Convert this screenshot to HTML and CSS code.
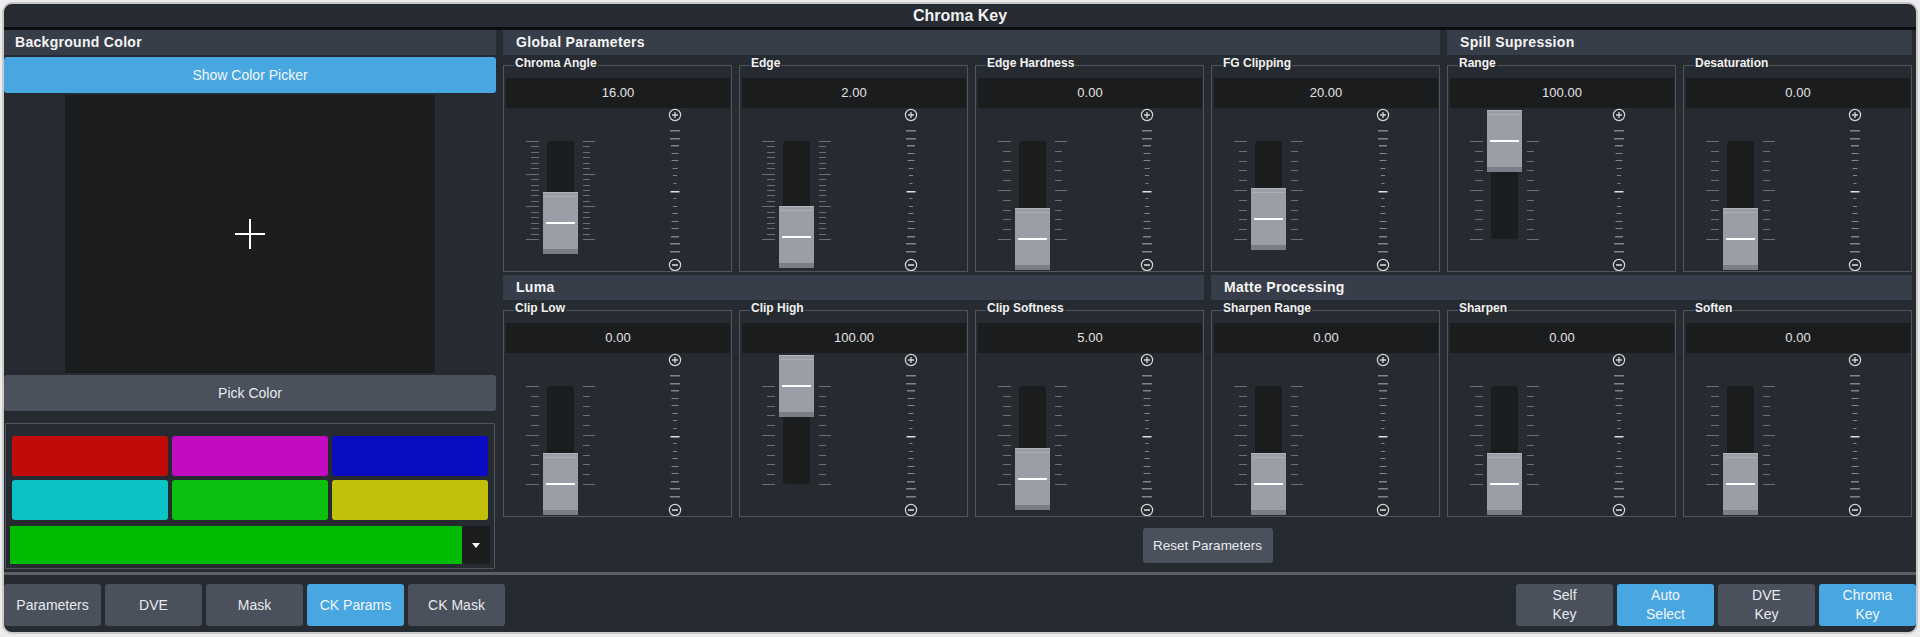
FILE: index.html
```html
<!DOCTYPE html>
<html lang="en">
<head>
  <meta charset="UTF-8">
  <meta name="viewport" content="width=device-width, initial-scale=1.0">
  <title>Chroma Key</title>
  <link rel="stylesheet" href="styles.css">
</head>
<body>
  <div class="window">
    <div class="titlebar">Chroma Key</div>

    <div class="main">
      <div class="left">
        <div class="section-head">Background Color</div>
        <button class="btn wide-btn btn-blue show-picker">Show Color Picker</button>
        <div class="picker-row">
          <div class="picker">
            <svg width="30" height="30" viewBox="0 0 30 30">
              <rect x="0" y="14" width="30" height="2" fill="#fff"/>
              <rect x="14" y="0" width="2" height="30" fill="#fff"/>
            </svg>
          </div>
        </div>
        <button class="btn wide-btn">Pick Color</button>
        <div class="swatch-box">
          <div class="swatches">
            <div class="swatch" style="background:#c10b0b"></div>
            <div class="swatch" style="background:#c10cc1"></div>
            <div class="swatch" style="background:#0a0cc1"></div>
            <div class="swatch" style="background:#0bc2c5"></div>
            <div class="swatch" style="background:#0bc10f"></div>
            <div class="swatch" style="background:#c1c10c"></div>
          </div>
          <div class="combo">
            <div class="combo-color"></div>
            <div class="combo-arrow">
              <svg width="8" height="5" viewBox="0 0 8 5"><path d="M0 0h8L4 5z" fill="#fff"/></svg>
            </div>
          </div>
        </div>
      </div>

      <div class="right">
        <div class="param-grid">
          <div class="section-head span-4">Global Parameters</div>
          <div class="section-head span-2">Spill Supression</div>

          <fieldset class="param"><legend>Chroma Angle</legend><div class="value">16.00</div><div class="fader" data-value="16" data-ticks="19"></div></fieldset>
          <fieldset class="param"><legend>Edge</legend><div class="value">2.00</div><div class="fader" data-value="2" data-ticks="19"></div></fieldset>
          <fieldset class="param"><legend>Edge Hardness</legend><div class="value">0.00</div><div class="fader" data-value="0" data-ticks="11"></div></fieldset>
          <fieldset class="param"><legend>FG Clipping</legend><div class="value">20.00</div><div class="fader" data-value="20" data-ticks="11"></div></fieldset>
          <fieldset class="param"><legend>Range</legend><div class="value">100.00</div><div class="fader" data-value="100" data-ticks="11"></div></fieldset>
          <fieldset class="param"><legend>Desaturation</legend><div class="value">0.00</div><div class="fader" data-value="0" data-ticks="11"></div></fieldset>

          <div class="section-head span-3 second">Luma</div>
          <div class="section-head span-3 second">Matte Processing</div>

          <fieldset class="param"><legend>Clip Low</legend><div class="value">0.00</div><div class="fader" data-value="0" data-ticks="11"></div></fieldset>
          <fieldset class="param"><legend>Clip High</legend><div class="value">100.00</div><div class="fader" data-value="100" data-ticks="11"></div></fieldset>
          <fieldset class="param"><legend>Clip Softness</legend><div class="value">5.00</div><div class="fader" data-value="5" data-ticks="11"></div></fieldset>
          <fieldset class="param"><legend>Sharpen Range</legend><div class="value">0.00</div><div class="fader" data-value="0" data-ticks="11"></div></fieldset>
          <fieldset class="param"><legend>Sharpen</legend><div class="value">0.00</div><div class="fader" data-value="0" data-ticks="11"></div></fieldset>
          <fieldset class="param"><legend>Soften</legend><div class="value">0.00</div><div class="fader" data-value="0" data-ticks="11"></div></fieldset>
        </div>
        <div class="reset-row">
          <button class="btn reset-btn">Reset Parameters</button>
        </div>
      </div>
    </div>

    <div class="bottombar">
      <div class="tab-group">
        <button class="btn tab">Parameters</button>
        <button class="btn tab">DVE</button>
        <button class="btn tab">Mask</button>
        <button class="btn tab btn-blue">CK Params</button>
        <button class="btn tab">CK Mask</button>
      </div>
      <div class="tab-group">
        <button class="btn tab">Self<br>Key</button>
        <button class="btn tab btn-blue">Auto<br>Select</button>
        <button class="btn tab">DVE<br>Key</button>
        <button class="btn tab btn-blue">Chroma<br>Key</button>
      </div>
    </div>
  </div>

  <script>
    const TOP = 33;
    const SPAN = 98;
    const scaleWidths = [10, 10, 8, 7, 7, 5, 4, 3, 9, 3, 4, 5, 7, 7, 8, 10, 10];

    function buildFader(el) {
      const value = parseFloat(el.dataset.value);
      const ticks = parseInt(el.dataset.ticks, 10);
      const step = SPAN / (ticks - 1);
      const major = (ticks - 1) / (ticks === 19 ? 3 : 2);
      let svg = '';

      // ticks either side of the fader
      for (let i = 0; i < ticks; i++) {
        const y = Math.round(TOP + i * step);
        const long = i % major === 0;
        svg += `<rect x="${long ? 20 : 25}" y="${y}" width="${long ? 13 : 8}" height="1" fill="#6b7078"/>`;
        svg += `<rect x="77" y="${y}" width="${long ? 12 : 7}" height="1" fill="#6b7078"/>`;
      }

      svg += `<rect x="41" y="${TOP}" width="27" height="${SPAN}" rx="3" fill="#1b1c1e"/>`;

      // fine adjust scale
      scaleWidths.forEach((w, i) => {
        const y = Math.round(22 + i * 7.5625);
        const mid = i === 8;
        const thick = w >= 8 && !mid;
        svg += `<rect x="${169 - w / 2}" y="${y}" width="${w}" height="${mid || thick ? 1.5 : 1}" fill="${mid ? '#e0e0e0' : '#80848c'}"/>`;
      });

      // handle
      const cy = Math.round(TOP + (1 - value / 100) * SPAN);
      svg += `<rect x="37" y="${cy - 31}" width="35" height="62" fill="#9a9ea7"/>`;
      svg += `<rect x="37" y="${cy - 31}" width="35" height="1" fill="#b0b4bb"/>`;
      svg += `<rect x="38" y="${cy - 27}" width="33" height="1" fill="#abafb6"/>`;
      svg += `<rect x="37" y="${cy + 26}" width="35" height="5" fill="#7a7e86"/>`;
      svg += `<rect x="40" y="${cy - 1}" width="29" height="2" fill="#ffffff"/>`;

      // plus / minus
      svg += `<circle cx="169" cy="7" r="5.6" fill="none" stroke="#d6d6d6" stroke-width="1.2"/>`;
      svg += `<path d="M166 7h6M169 4v6" stroke="#d6d6d6" stroke-width="1.3"/>`;
      svg += `<circle cx="169" cy="157" r="5.6" fill="none" stroke="#d6d6d6" stroke-width="1.2"/>`;
      svg += `<path d="M166 157h6" stroke="#d6d6d6" stroke-width="1.6"/>`;

      el.innerHTML = `<svg width="224" height="163" viewBox="0 0 224 163">${svg}</svg>`;
    }

    document.querySelectorAll('.fader').forEach(buildFader);
  </script>
</body>
</html>
```

FILE: styles.css
```css
* {
  box-sizing: border-box;
}
body {
  margin: 0;
  background: #ececec;
  font-family: "Liberation Sans", Arial, sans-serif;
}
.window {
  margin: 2px;
  height: 632px;
  border: 2px solid #c9c9c9;
  border-radius: 10px;
  background: #262a31;
  overflow: hidden;
  display: flex;
  flex-direction: column;
}
.titlebar {
  height: 26px;
  line-height: 24px;
  border-bottom: 3px solid #0c0d0f;
  text-align: center;
  color: #f2f2f2;
  font-weight: bold;
  font-size: 16px;
}
.main {
  display: flex;
  gap: 7px;
  height: 542px;
}
.left {
  width: 492px;
  display: flex;
  flex-direction: column;
}
.right {
  width: 1409px;
}
.section-head {
  height: 25px;
  line-height: 25px;
  background: #383e49;
  color: #f5f5f5;
  font-weight: bold;
  font-size: 14px;
  letter-spacing: 0.3px;
  padding-left: 11px;
}
.right .section-head {
  padding-left: 13px;
}
.right .section-head.second {
  margin-top: 1px;
}
.btn {
  border: none;
  border-radius: 3px;
  background: #4a505c;
  color: #e8eaee;
  font-family: "Liberation Sans", Arial, sans-serif;
  font-size: 14px;
  padding: 0;
  cursor: pointer;
}
.btn-blue {
  background: #48a6e1;
  color: #f2f7fb;
}
.wide-btn {
  width: 100%;
  height: 36px;
}
.show-picker {
  margin-top: 2px;
}
.picker-row {
  height: 282px;
  padding: 2px 0;
  display: flex;
  justify-content: center;
}
.picker {
  width: 370px;
  height: 278px;
  background: #1c1d1f;
  display: flex;
  align-items: center;
  justify-content: center;
}
.picker svg {
  display: block;
}
.swatch-box {
  margin: 12px 1px 0;
  border: 1px solid #50555c;
  padding: 12px 4px 4px;
}
.swatches {
  display: grid;
  grid-template-columns: repeat(3, 1fr);
  grid-auto-rows: 40px;
  gap: 4px;
  margin: 0 2px;
}
.swatch {
  border-radius: 3px;
}
.combo {
  margin-top: 6px;
  height: 38px;
  display: flex;
}
.combo-color {
  flex: 1;
  background: #00bb00;
}
.combo-arrow {
  width: 28px;
  background: #1c1d1f;
  display: flex;
  align-items: center;
  justify-content: center;
}
.combo-arrow svg {
  display: block;
}
.param-grid {
  display: grid;
  grid-template-columns: repeat(6, 229px);
  column-gap: 7px;
  row-gap: 2px;
}
.span-4 {
  grid-column: span 4;
}
.span-3 {
  grid-column: span 3;
}
.span-2 {
  grid-column: span 2;
}
.param {
  margin: 0;
  min-width: 0;
  padding: 5px 1px 0 2px;
  border: 1px solid #51555c;
}
.param legend {
  margin-left: 8px;
  padding: 0 1px 4px;
  font-size: 12px;
  font-weight: bold;
  line-height: 12px;
  color: #f2f2f2;
}
.value {
  height: 30px;
  line-height: 30px;
  background: #1b1c1e;
  color: #e4e4e4;
  text-align: center;
  font-size: 13px;
}
.fader svg {
  display: block;
}
.reset-row {
  display: flex;
  justify-content: center;
  margin-top: 11px;
}
.reset-btn {
  width: 130px;
  height: 35px;
  font-size: 13.5px;
}
.bottombar {
  border-top: 3px solid #5b5f66;
  height: 60px;
  padding: 9px 0 6px;
  display: flex;
  justify-content: space-between;
}
.tab-group {
  display: flex;
  gap: 4px;
}
.tab {
  width: 97px;
  height: 42px;
  line-height: 19px;
}
```
